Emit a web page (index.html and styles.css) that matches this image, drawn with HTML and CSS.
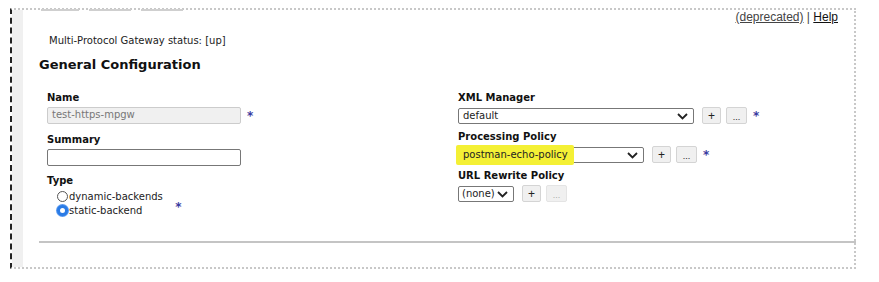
FILE: index.html
```html
<!DOCTYPE html>
<html>
<head>
<meta charset="utf-8">
<link rel="stylesheet" href="styles.css">
</head>
<body>
<div class="frame">
  <div class="strip"></div>
  <div class="main">
    <div class="tabs"><span class="tab t1"></span><span class="tab t2"></span><span class="tab t3"></span></div>
    <div class="toplinks"><a class="dep">(deprecated)</a> | <a class="help">Help</a></div>
    <div class="status">Multi-Protocol Gateway status: [up]</div>
    <h2 class="title">General Configuration</h2>
    <div class="cols">
      <div class="col left">
        <div class="label">Name</div>
        <div class="row r1"><div class="input disabled">test-https-mpgw</div><span class="req">*</span></div>
        <div class="label">Summary</div>
        <div class="row r2"><div class="input"></div></div>
        <div class="label">Type</div>
        <div class="radios">
          <div class="radio"><span class="rb"></span>dynamic-backends</div>
          <div class="radio"><span class="rb on"></span>static-backend<span class="req req2">*</span></div>
        </div>
      </div>
      <div class="col right">
        <div class="label">XML Manager</div>
        <div class="row"><div class="select s1">default<span class="chev"><svg width="11" height="7" viewBox="0 0 11 7"><path d="M1 1 L5.5 5.5 L10 1" fill="none" stroke="#222" stroke-width="1.8"/></svg></span></div><span class="btn">+</span><span class="btn dots">...</span><span class="req">*</span></div>
        <div class="label">Processing Policy</div>
        <div class="row"><div class="select s2"><span class="hl"></span><span class="txt">postman-echo-policy</span><span class="chev"><svg width="11" height="7" viewBox="0 0 11 7"><path d="M1 1 L5.5 5.5 L10 1" fill="none" stroke="#222" stroke-width="1.8"/></svg></span></div><span class="btn">+</span><span class="btn dots">...</span><span class="req">*</span></div>
        <div class="label">URL Rewrite Policy</div>
        <div class="row"><div class="select s3">(none)<span class="chev"><svg width="11" height="7" viewBox="0 0 11 7"><path d="M1 1 L5.5 5.5 L10 1" fill="none" stroke="#222" stroke-width="1.8"/></svg></span></div><span class="btn">+</span><span class="btn dots off">...</span></div>
      </div>
    </div>
    <div class="rule"></div>
  </div>
</div>
</body>
</html>
```
FILE: styles.css
```css
* { box-sizing: border-box; }
body { margin: 0; background: #fff; font-family: "DejaVu Sans", Verdana, sans-serif; color: #222; }
.frame {
  margin: 8px 0 0 10px;
  width: 846px;
  height: 261px;
  border-top: 2px dotted #c8c8c8;
  border-right: 2px dotted #c8c8c8;
  border-bottom: 2px dotted #c8c8c8;
  border-left: 2px dashed #222;
  display: flex;
}
.strip { width: 11px; background: #f0f0f0; flex: none; }
.main { flex: 1; position: relative; padding-left: 16px; }
.tabs { position: absolute; top: -1px; left: 18px; display: flex; }
.tab { height: 2px; background: #cfcfcf; margin-right: 10px; }
.t1 { width: 38px; } .t2 { width: 42px; } .t3 { width: 42px; }
.toplinks { position: absolute; right: 16px; top: 0px; font-family: "Liberation Sans", Arial, sans-serif; font-size: 12px; color: #444; }
.toplinks a { text-decoration: underline; }
.dep { color: #444; }
.help { color: #111; }
.status { font-size: 10px; margin: 25px 0 0 10px; color: #222; }
.title { font-size: 13px; font-weight: bold; margin: 11px 0 0 0; color: #111; }
.cols { display: flex; margin-top: 20px; }
.col.left { width: 419px; padding-left: 8px; }
.label { font-size: 10px; font-weight: bold; color: #111; height: 13px; }
.row { display: flex; align-items: center; margin-top: 2px; }
.input { width: 194px; height: 17px; border: 1px solid #777; border-radius: 2px; background: #fff; font-size: 10px; padding: 1px 4px; }
.input.disabled { background: #f0f0f0; border-color: #ccc; color: #777; }
.req { color: #3a3aa0; font-size: 12px; margin-left: 6px; font-weight: bold; }
.left .r1 { margin-bottom: 10px; }
.left .r2 { margin-bottom: 9px; }
.radios { margin: 1px 0 0 10px; font-size: 10px; }
.radio { display: flex; align-items: center; height: 14px; }
.rb { width: 11px; height: 11px; border: 1px solid #555; border-radius: 50%; margin-right: 1px; display: inline-block; }
.rb.on { border: 3px solid #2a7be6; background: #fff; box-shadow: 0 0 0 1px #5a9af0; }
.req2 { margin-left: 33px; margin-top: -7px; }
.right .row { margin-bottom: 7px; }
.select { position: relative; height: 16px; border: 1px solid #777; border-radius: 2px; background: #fff; font-size: 10px; padding: 0 4px; display: flex; align-items: center; }
.s1 { width: 236px; }
.s2 { width: 186px; }
.s3 { width: 56px; padding-left: 3px; }
.chev { position: absolute; right: 5px; top: 4px; line-height: 0; }
.hl { position: absolute; left: -3px; top: -3px; width: 118px; height: 20px; background: #f4f035; border-radius: 2px; }
.txt { position: relative; }
.btn { margin-left: 8px; width: 19px; height: 17px; border: 1px solid #d4d4d4; background: #f0f0f0; border-radius: 2px; font-size: 12px; display: flex; align-items: center; justify-content: center; color: #222; font-family: "Liberation Sans", Arial, sans-serif; }
.btn.dots { margin-left: 5px; width: 21px; font-size: 9px; padding-top: 3px; }
.btn.off { color: #aaa; border-color: #e4e4e4; }
.rule { margin-top: 24px; height: 2px; background: #c4c4c4; margin-right: -2px; }
```
